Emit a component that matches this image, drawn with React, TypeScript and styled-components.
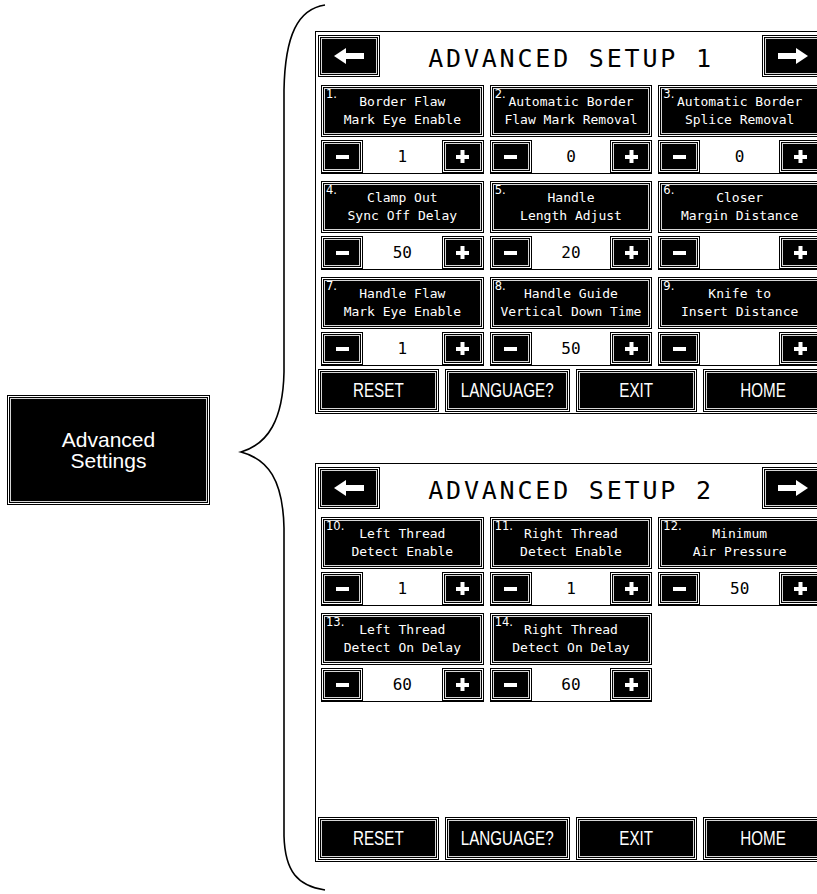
import React from "react";
import styled, { createGlobalStyle, css } from "styled-components";

type Setting = {
  num: string;
  lines: [string, string];
  value: string;
};

const setupOne: Setting[] = [
  { num: "1.", lines: ["Border Flaw", "Mark Eye Enable"], value: "1" },
  { num: "2.", lines: ["Automatic Border", "Flaw Mark Removal"], value: "0" },
  { num: "3.", lines: ["Automatic Border", "Splice Removal"], value: "0" },
  { num: "4.", lines: ["Clamp Out", "Sync Off Delay"], value: "50" },
  { num: "5.", lines: ["Handle", "Length Adjust"], value: "20" },
  { num: "6.", lines: ["Closer", "Margin Distance"], value: "" },
  { num: "7.", lines: ["Handle Flaw", "Mark Eye Enable"], value: "1" },
  { num: "8.", lines: ["Handle Guide", "Vertical Down Time"], value: "50" },
  { num: "9.", lines: ["Knife to", "Insert Distance"], value: "" },
];

const setupTwo: Setting[] = [
  { num: "10.", lines: ["Left Thread", "Detect Enable"], value: "1" },
  { num: "11.", lines: ["Right Thread", "Detect Enable"], value: "1" },
  { num: "12.", lines: ["Minimum", "Air Pressure"], value: "50" },
  { num: "13.", lines: ["Left Thread", "Detect On Delay"], value: "60" },
  { num: "14.", lines: ["Right Thread", "Detect On Delay"], value: "60" },
];

const footerLabels = ["RESET", "LANGUAGE?", "EXIT", "HOME"];

const ArrowIcon = ({ right }: { right?: boolean }) => (
  <svg width="30" height="16" viewBox="0 0 30 16">
    <polygon
      points="0,8 12,0 12,5 30,5 30,11 12,11 12,16"
      fill="#fff"
      transform={right ? "translate(30,0) scale(-1,1)" : undefined}
    />
  </svg>
);

const MinusIcon = () => (
  <svg width="13" height="13" viewBox="0 0 13 13">
    <rect x="0" y="5" width="13" height="4" fill="#fff" />
  </svg>
);

const PlusIcon = () => (
  <svg width="13" height="13" viewBox="0 0 13 13">
    <rect x="0" y="5" width="13" height="4" fill="#fff" />
    <rect x="4.5" y="0" width="4" height="13" fill="#fff" />
  </svg>
);

const SetupPanel = ({
  title,
  items,
  height,
}: {
  title: string;
  items: Setting[];
  height: number;
}) => (
  <Panel $height={height}>
    <TitleRow>
      <ArrowButton>
        <ArrowIcon />
      </ArrowButton>
      <Title>{title}</Title>
      <ArrowButton>
        <ArrowIcon right />
      </ArrowButton>
    </TitleRow>
    <SettingsGrid>
      {items.map((item) => (
        <Cell key={item.num}>
          <CardHead>
            <Num>{item.num}</Num>
            <span>{item.lines[0]}</span>
            <span>{item.lines[1]}</span>
          </CardHead>
          <Stepper>
            <StepButton>
              <MinusIcon />
            </StepButton>
            <Value>{item.value}</Value>
            <StepButton>
              <PlusIcon />
            </StepButton>
          </Stepper>
        </Cell>
      ))}
    </SettingsGrid>
    <Footer>
      {footerLabels.map((label) => (
        <FooterButton key={label}>
          <Narrow>{label}</Narrow>
        </FooterButton>
      ))}
    </Footer>
  </Panel>
);

const App = () => {
  return (
    <Page>
      <GlobalStyle />
      <LeftSide>
        <SettingsButton>
          Advanced
          <br />
          Settings
        </SettingsButton>
      </LeftSide>
      <Panels>
        <SetupPanel title="ADVANCED SETUP 1" items={setupOne} height={383} />
        <SetupPanel title="ADVANCED SETUP 2" items={setupTwo} height={399} />
      </Panels>
      <Brace width="817" height="894" viewBox="0 0 817 894">
        <path
          d="M 325 5 C 298 9, 285 35, 284 90 L 284 372 C 283 420, 268 444, 241 452 C 268 459, 283 480, 284 528 L 284 836 C 285 872, 298 886, 325 890"
          fill="none"
          stroke="#000"
          strokeWidth="1.6"
        />
      </Brace>
    </Page>
  );
};

export default App;

const GlobalStyle = createGlobalStyle`
  html, body {
    margin: 0;
    padding: 0;
    background: #fff;
    overflow: hidden;
  }
  body {
    font-family: "DejaVu Sans Mono", monospace;
  }
`;

const bevel = css`
  box-sizing: border-box;
  background: #000;
  border: 1px solid #000;
  box-shadow: inset 0 0 0 1px #fff, inset 0 0 0 2px #000, inset 0 0 0 3px #d6d6d6;
`;

const Page = styled.div`
  position: relative;
  width: 817px;
  height: 894px;
  display: flex;
  overflow: hidden;
`;

const LeftSide = styled.div`
  flex: none;
  width: 315px;
  box-sizing: border-box;
  display: flex;
  align-items: center;
  padding: 6px 0 0 7px;
`;

const SettingsButton = styled.div`
  ${bevel};
  width: 203px;
  height: 110px;
  display: flex;
  align-items: center;
  justify-content: center;
  text-align: center;
  color: #fff;
  font-family: "Liberation Sans", Arial, sans-serif;
  font-size: 21px;
  line-height: 21px;
`;

const Panels = styled.div`
  flex: none;
  display: flex;
  flex-direction: column;
  gap: 49px;
  padding-top: 31px;
`;

const Panel = styled.div<{ $height: number }>`
  width: 512px;
  height: ${(p) => p.$height}px;
  box-sizing: border-box;
  border: 1px solid #000;
  padding: 3px 2px 1px;
  display: flex;
  flex-direction: column;
  background: #fff;
`;

const TitleRow = styled.div`
  display: flex;
  align-items: center;
  height: 42px;
`;

const ArrowButton = styled.div`
  ${bevel};
  flex: none;
  width: 62px;
  height: 42px;
  display: flex;
  align-items: center;
  justify-content: center;
`;

const Title = styled.div`
  flex: 1;
  text-align: center;
  padding-top: 4px;
  font-family: "DejaVu Sans Mono", monospace;
  font-size: 25px;
  letter-spacing: 2.8px;
  color: #000;
`;

const SettingsGrid = styled.div`
  display: grid;
  grid-template-columns: repeat(3, 1fr);
  column-gap: 6px;
  row-gap: 7px;
  padding: 0 3px;
  margin-top: 8px;
`;

const Cell = styled.div`
  display: flex;
  flex-direction: column;
  gap: 3px;
`;

const CardHead = styled.div`
  ${bevel};
  position: relative;
  height: 52px;
  display: flex;
  flex-direction: column;
  align-items: center;
  justify-content: center;
  color: #fff;
  font-family: "DejaVu Sans Mono", monospace;
  font-size: 13px;
  line-height: 18px;
  white-space: pre;
`;

const Num = styled.span`
  position: absolute;
  top: 3px;
  left: 4px;
  font-family: "DejaVu Sans", sans-serif;
  font-size: 11.5px;
  line-height: 11px;
`;

const Stepper = styled.div`
  display: flex;
  height: 34px;
  box-sizing: border-box;
  border-bottom: 1px solid #000;
`;

const StepButton = styled.div`
  ${bevel};
  flex: none;
  width: 42px;
  height: 33px;
  display: flex;
  align-items: center;
  justify-content: center;
`;

const Value = styled.div`
  flex: 1;
  text-align: center;
  font-family: "DejaVu Sans Mono", monospace;
  font-size: 16px;
  line-height: 33px;
  color: #000;
`;

const Footer = styled.div`
  display: grid;
  grid-template-columns: repeat(4, 1fr);
  gap: 6px;
  height: 43px;
  margin-top: auto;
`;

const FooterButton = styled.div`
  ${bevel};
  display: flex;
  align-items: center;
  justify-content: center;
  color: #fff;
  font-family: "Liberation Sans", Arial, sans-serif;
  font-size: 20px;
`;

const Narrow = styled.span`
  display: inline-block;
  transform: scaleX(0.76);
  white-space: nowrap;
`;

const Brace = styled.svg`
  position: absolute;
  top: 0;
  left: 0;
  pointer-events: none;
`;
